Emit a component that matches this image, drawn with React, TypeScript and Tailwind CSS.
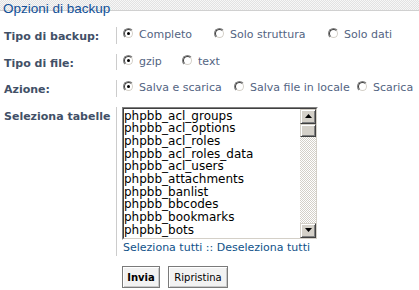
import React from "react";

const Radio = ({ checked }: { checked?: boolean }) => (
  <span className="mt-[1px] flex h-[11px] w-[11px] shrink-0 rounded-full border border-t-[#808080] border-l-[#808080] border-b-white border-r-white">
    <span className="flex h-full w-full items-center justify-center rounded-full border border-t-[#404040] border-l-[#404040] border-b-[#d4d0c8] border-r-[#d4d0c8] bg-white">
      {checked && <span className="h-[3px] w-[3px] rounded-full bg-black" />}
    </span>
  </span>
);

const Option = ({ label, checked, w }: { label: string; checked?: boolean; w: string }) => (
  <label className={`flex items-start whitespace-nowrap ${w}`}>
    <Radio checked={checked} />
    <span className="ml-[5px]">{label}</span>
  </label>
);

const Row = ({ label, children }: { label: string; children: React.ReactNode }) => (
  <div className="mb-[10px] flex items-start">
    <div className="w-[110px] shrink-0 whitespace-nowrap pl-[4px] pt-[4px] font-['DejaVu_Sans',sans-serif] text-[11px] font-bold leading-[12px] text-[#425067]">
      {label}
    </div>
    <div className="ml-[6px] min-h-[16px] flex-1 border-l border-[#cccccc] pl-[5px]">{children}</div>
  </div>
);

const tables = [
  "phpbb_acl_groups",
  "phpbb_acl_options",
  "phpbb_acl_roles",
  "phpbb_acl_roles_data",
  "phpbb_acl_users",
  "phpbb_attachments",
  "phpbb_banlist",
  "phpbb_bbcodes",
  "phpbb_bookmarks",
  "phpbb_bots",
];

const ScrollBtn = ({ dir }: { dir: "up" | "down" }) => (
  <div className="flex h-[15px] items-center justify-center border border-t-[#d4d0c8] border-l-[#d4d0c8] border-b-[#404040] border-r-[#404040] bg-[#d4d0c8] shadow-[inset_1px_1px_0_#ffffff,inset_-1px_-1px_0_#808080]">
    <svg width="7" height="4" viewBox="0 0 7 4">
      {dir === "up" ? <path d="M3.5 0 L7 4 L0 4 Z" fill="#000" /> : <path d="M0 0 L7 0 L3.5 4 Z" fill="#000" />}
    </svg>
  </div>
);

export default function App() {
  return (
    <div className="h-[290px] w-[419px] overflow-hidden bg-white font-['DejaVu_Sans',sans-serif] text-[11px] text-[#536482]">
      <div className="h-[11px] border-b border-[#d0d0d0] bg-[image:repeating-conic-gradient(#e2e2e2_0_25%,#f7f7f7_0_50%)] bg-size-[2px_2px] pl-[3px]">
        <div className="h-[10px] whitespace-nowrap font-['Liberation_Sans',Arial,sans-serif] text-[13.5px] leading-[18px] text-[#115098]">
          Opzioni di backup
        </div>
      </div>
      <div className="pt-[16px]">
        <Row label="Tipo di backup:">
          <div className="flex pl-[1px]">
            <Option label="Completo" checked w="w-[91px]" />
            <Option label="Solo struttura" w="w-[114px]" />
            <Option label="Solo dati" w="" />
          </div>
        </Row>
        <Row label="Tipo di file:">
          <div className="flex pl-[1px]">
            <Option label="gzip" checked w="w-[59px]" />
            <Option label="text" w="" />
          </div>
        </Row>
        <Row label="Azione:">
          <div className="flex pl-[1px]">
            <Option label="Salva e scarica" checked w="w-[111px]" />
            <Option label="Salva file in locale" w="w-[123px]" />
            <Option label="Scarica" w="" />
          </div>
        </Row>
        <Row label="Seleziona tabelle">
          <div className="h-[133px] w-[196px] border border-t-[#808080] border-l-[#808080] border-b-white border-r-white">
            <div className="flex h-full w-full border border-t-[#404040] border-l-[#404040] border-b-[#d4d0c8] border-r-[#d4d0c8] bg-white">
              <div className="flex-1 overflow-hidden pt-[1px] text-[12px] leading-[12.7px] text-black">
                {tables.map((t) => (
                  <div key={t} className="whitespace-nowrap">
                    {t}
                  </div>
                ))}
              </div>
              <div className="flex w-[16px] flex-col">
                <ScrollBtn dir="up" />
                <div className="h-[13px] border border-t-[#d4d0c8] border-l-[#d4d0c8] border-b-[#404040] border-r-[#404040] bg-[#d4d0c8] shadow-[inset_1px_1px_0_#ffffff,inset_-1px_-1px_0_#808080]" />
                <div className="flex-1 bg-[image:repeating-conic-gradient(#d4d0c8_0_25%,#ffffff_0_50%)] bg-size-[2px_2px]" />
                <ScrollBtn dir="down" />
              </div>
            </div>
          </div>
          <div className="whitespace-nowrap pl-[1px] text-[#105289]">
            <span>Seleziona tutti</span> :: <span>Deseleziona tutti</span>
          </div>
        </Row>
        <div className="flex gap-[8px] pl-[122px]">
          <button className="h-[22px] w-[38px] border border-[#7a7a7a] bg-[#f2f2f2] text-[10px] font-bold text-black shadow-[inset_1px_1px_0_#ffffff,inset_-1px_-1px_0_#c8c8c8]">
            Invia
          </button>
          <button className="h-[22px] w-[60px] border border-[#7a7a7a] bg-[#f2f2f2] text-[10px] text-black shadow-[inset_1px_1px_0_#ffffff,inset_-1px_-1px_0_#c8c8c8]">
            Ripristina
          </button>
        </div>
      </div>
    </div>
  );
}
